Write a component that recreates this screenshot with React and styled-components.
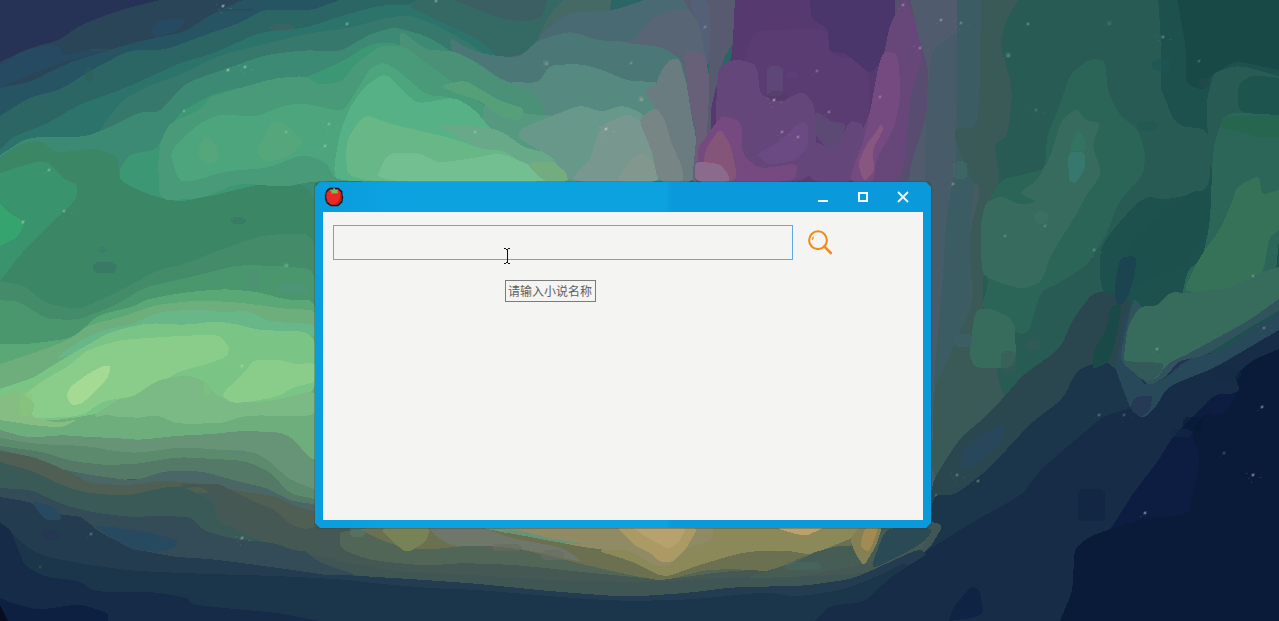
import React from 'react';
import styled, { createGlobalStyle } from 'styled-components';

const GlobalStyle = createGlobalStyle`
  * { box-sizing: border-box; }
  body { margin: 0; overflow: hidden; background: #0a1936; }
`;

const Desktop = styled.main`
  position: relative;
  width: 1279px;
  height: 621px;
  overflow: hidden;
  font-family: "Noto Sans CJK SC", sans-serif;
`;

const Wallpaper = styled.svg`
  display: block;
  width: 1279px;
  height: 621px;
`;

const AppWindow = styled.section`
  position: absolute;
  left: 315px;
  top: 182px;
  width: 616px;
  height: 346px;
  display: flex;
  flex-direction: column;
  padding: 0 8px 8px;
  background: linear-gradient(90deg, #0a9cdd 0%, #0ca1e0 12%, #0ca1df 57%, #0a9adc 58%, #0a9adc 100%);
  clip-path: polygon(5px 0, 611px 0, 616px 5px, 616px 341px, 611px 346px, 5px 346px, 0 341px, 0 5px);
`;

const WindowShade = styled.div`
  position: absolute;
  left: 314px;
  top: 181px;
  width: 618px;
  height: 348px;
  border-radius: 6px;
  background: rgba(45, 65, 65, 0.3);
`;

const TitleBar = styled.header`
  display: flex;
  align-items: center;
  justify-content: space-between;
  height: 30px;
  flex: none;
`;

const AppIcon = styled.svg`
  width: 22px;
  height: 22px;
  margin-bottom: 1px;
`;

const Controls = styled.div`
  display: flex;
`;

const ControlButton = styled.button`
  display: grid;
  place-items: center;
  width: 40px;
  height: 30px;
  padding: 0;
  border: 0;
  background: transparent;
  color: #f4f9fb;

  svg { display: block; width: 12px; height: 12px; }
`;

const Content = styled.div`
  flex: 1;
  padding: 13px 10px;
  background: #f4f4f2;
`;

const SearchRow = styled.form`
  display: flex;
  align-items: center;
  gap: 14px;
`;

const SearchInput = styled.input`
  width: 460px;
  height: 35px;
  padding: 0 6px;
  border: 1px solid #5dabe6;
  border-radius: 0;
  outline: none;
  background: #f4f4f2;
`;

const SearchButton = styled.button`
  width: 26px;
  height: 26px;
  margin-bottom: 1px;
  padding: 0;
  border: 0;
  background: transparent;

  svg { display: block; }
`;

const Tooltip = styled.div`
  position: absolute;
  left: 505px;
  top: 280px;
  width: 91px;
  height: 22px;
  padding-left: 2px;
  border: 1px solid #7b7b7b;
  background: #f4f4f2;
  color: #5e5e5e;
  font-size: 12px;
  line-height: 20px;
  white-space: nowrap;
`;

const TextCursor = styled.svg`
  position: absolute;
  left: 503px;
  top: 248px;
  width: 8px;
  height: 16px;
`;

// Wallpaper colour bands, painted back to front.
const bands = [
  ['#2a4558', '0,62 30,48 60,40 80,25 120,10 180,-5 900,-5 900,300 0,300'],
  ['#264a62', '0,66 24,50 58,44 64,56 95,48 110,50 50,66 0,88'],
  ['#264a62', '150,30 160,20 186,18 180,30 155,38'],
  ['#275463', '0,88 30,82 70,62 110,50 140,41 185,32 210,15 247,-2 900,-5 900,300 0,300'],
  ['#2b6665', '0,116 30,97 60,90 95,68 130,50 165,50 205,35 240,23 265,9 310,11 345,-2 900,-5 900,300 0,300'],
  ['#2c746b', '0,150 12,137 45,125 80,104 118,91 150,77 180,63 215,53 260,32 305,28 335,18 376,6 410,4 440,15 470,31 500,50 540,90 540,300 0,300'],
  ['#37786d', '98,135 105,122 123,100 150,85 180,75 220,55 260,45 310,33 350,28 385,18 410,15 440,27 470,44 500,65 530,92 540,180 98,180'],

  ['#346964', '405,5 426,-2 610,-2 590,72 540,80 500,60 480,40 450,26'],
  ['#3b5f63', '447,-2 548,-2 542,18 522,22 495,17 473,7'],
  ['#456964', '550,14 565,-2 611,-2 610,12 580,17 550,26 542,48 538,36'],
  ['#496a73', '507,57 525,54 547,29 570,12 612,11 650,-2 700,-2 716,182 560,182'],
  ['#4b7877', '448,36 470,50 490,55 518,58 539,40 570,31 601,41 640,42 672,48 683,61 690,97 692,182 560,182 500,140 460,80'],
  ['#568a81', '485,90 510,82 538,83 550,65 580,64 600,69 628,81 660,82 676,106 692,182 500,182'],

  ['#3c8a73', '0,155 28,137 85,137 110,127 140,112 160,112 185,83 225,69 265,55 305,50 340,52 370,34 395,27 426,36 445,47 475,70 505,94 540,115 530,190 0,300'],
  ['#3b8765', '0,157 20,144 40,140 57,153 95,148 118,156 120,181 150,196 180,202 210,193 245,181 285,180 307,187 318,205 318,330 0,330'],
  ['#39946e', '0,173 35,162 48,162 65,180 77,184 77,198 62,213 45,230 24,250 0,281'],
  ['#35a46f', '0,204 12,215 25,222 18,237 0,246'],
  ['#3c9775', '120,168 130,154 156,150 165,133 180,113 208,96 240,87 277,87 312,75 345,60 370,44 395,42 426,60 460,88 490,113 500,180 315,180 260,184 215,195 180,202 150,195 120,181'],
  ['#4b9178', '400,30 426,50 454,51 476,62 500,79 526,88 536,97 545,110 540,130 496,124 480,105 457,90 430,80 400,50'],
  ['#489a79', '158,163 161,140 170,123 200,110 210,97 240,88 276,78 305,76 319,85 342,82 357,62 382,45 405,47 430,66 465,91 496,116 520,181 315,181 285,187 238,183 203,198 160,201'],
  ['#559981', '485,100 525,114 560,116 596,150 594,182 500,182 480,130'],
  ['#4da57e', '170,153 181,140 200,123 220,114 255,117 282,106 304,103 342,112 355,94 370,68 385,62 405,76 426,95 450,97 470,116 495,137 540,180 336,181 326,162 303,154 268,168 226,171 190,182 178,180'],
  ['#55a079', '440,86 465,80 483,91 500,101 524,108 520,121 500,116 481,101 455,93'],
  ['#55a67a', '197,154 205,136 215,143 220,160 207,165'],
  ['#55a67a', '256,153 272,121 286,125 305,142 288,157 267,162'],
  ['#56b187', '334,166 340,132 351,105 366,85 386,73 402,90 418,104 455,97 475,110 490,128 525,163 545,183 336,182'],
  ['#68a98a', '436,125 465,125 500,130 525,148 558,155 567,182 530,182 490,155 463,140'],
  ['#68b887', '347,182 346,141 364,114 390,124 425,132 454,139 482,149 505,151 525,165 545,182'],
  ['#74bf91', '374,182 388,153 420,153 438,163 474,158 500,153 530,165 565,182'],
  ['#689889', '520,129 554,115 580,105 602,112 623,105 646,115 659,182 566,182 554,158 530,145 518,137'],
  ['#73ad7d', '525,163 552,161 567,173 568,182 545,182'],
  ['#78978f', '568,182 590,160 594,145 601,126 627,113 645,125 658,154 662,182'],
  ['#82988e', '615,182 629,162 642,152 655,163 660,182'],
  ['#6a7c80', '656,85 660,73 669,60 679,58 684,76 692,103 697,150 695,182 663,182 665,149 657,112 644,89'],
  ['#778585', '638,119 656,107 665,120 671,142 682,167 684,182 658,182 652,151'],
  ['#576575', '634,40 646,24 661,14 687,7 699,25 708,57 705,111 696,134 693,125 683,61 663,47 625,43'],
  ['#585a70', '682,-2 737,-2 735,40 722,60 716,118 706,145 704,121 710,78 705,32 689,9'],
  ['#686078', '684,50 704,52 710,79 706,150 697,182 692,182 697,130 689,103'],
  ['#536078', '692,8 700,28 708,70 711,30 708,0 690,-2'],
  ['#563a6f', '735,-2 902,-2 900,182 714,182 710,113 717,82 732,60'],
  ['#5a3c73', '744,55 756,30 828,29 831,56 870,60 868,182 738,182 742,105'],
  ['#64467a', '718,66 737,59 757,65 760,95 780,102 803,91 815,105 816,145 809,182 718,182 716,111'],
  ['#764a80', '699,182 697,149 710,131 722,115 742,122 742,154 759,169 798,163 795,182'],
  ['#855579', '705,150 720,128 731,146 738,182 701,182'],
  ['#8a6a8d', '695,182 695,161 720,164 728,174 730,182'],
  ['#6b4982', '756,154 778,143 801,121 808,124 808,148 794,161 768,165'],
  ['#4a366b', '810,-2 902,-2 893,31 884,60 870,74 855,61 844,53 829,52 828,28 811,19'],
  ['#5c4974', '815,110 832,122 846,123 840,145 829,150 815,135'],
  ['#64467a', '811,140 835,150 850,120 865,125 858,182 808,182'],
  ['#465a62', '900,-5 1010,-5 1010,490 920,530 918,182 900,182'],
  ['#584d71', '895,-2 935,-2 929,110 909,182 890,182'],
  ['#674679', '890,24 905,-2 915,20 923,55 910,96 903,182 847,182 853,151 871,111 881,68'],
  ['#754a80', '881,52 898,53 901,96 894,129 876,159 874,182 848,182 866,134'],
  ['#87577f', '858,164 866,145 876,132 881,124 884,129 872,150 875,171 864,182'],
  ['#505b6e', '910,-2 962,-2 958,72 951,180 941,311 931,530 922,530 905,182 929,109 928,66 919,39'],
  ['#485b69', '925,57 960,28 957,90 954,150 964,166 958,202 946,278 940,368 932,425 925,521'],
  ['#3b5c62', '957,-2 984,-2 979,127 978,160 969,226 971,280 967,348 949,405 932,421 935,365 943,280 946,218 957,159'],
  ['#3a5a57', '981,-2 1032,-2 1032,90 1020,142 1032,250 1032,450 931,490 934,390 943,370 956,340 973,304 969,236 981,188 971,180 955,139 955,128 979,128'],
  ['#275b53', '1020,-2 1160,-2 1180,30 1190,182 1163,280 1082,391 1018,417 999,386 994,338 982,312 985,242 991,201 1000,180 994,143 1007,138 1013,90 1000,45 1006,20'],
  ['#1c514d', '1158,-2 1279,-2 1279,345 1154,360 1126,360 1099,280 1101,244 1139,200 1161,194 1155,138 1161,132 1161,77 1161,39'],
  ['#275b53', '1140,80 1160,85 1175,125 1210,130 1210,190 1165,200 1140,195'],
  ['#194946', '1177,-2 1279,-2 1279,70 1236,61 1225,67 1210,76 1205,91 1186,84 1186,48'],
  ['#275b53', '1210,87 1214,73 1238,65 1279,76 1279,177 1211,182 1206,104'],
  ['#1d544d', '1238,84 1252,75 1279,78 1279,119 1238,112'],
  ['#2b6557', '1047,135 1059,108 1070,74 1090,59 1105,60 1108,92 1120,116 1137,128 1145,150 1144,174 1119,201 1106,235 1088,264 1063,281 1040,292 1027,339 981,311 989,280 980,258 987,204 1000,180 1021,175 1045,169'],
  ['#376b5d', '986,202 1002,196 1020,205 1038,202 1018,193 1038,180 1051,155 1061,120 1077,108 1085,120 1101,123 1092,145 1102,174 1087,194 1073,220 1051,254 1042,282 1022,289 1000,283 983,275 981,257 981,222'],
  ['#327460', '1069,151 1077,130 1085,138 1086,151'],
  ['#36786d', '1068,152 1085,152 1085,169 1076,183 1069,182'],
  ['#376b5c', '975,310 990,308 1015,320 1016,368 975,368 969,355'],
  ['#2b6659', '1225,112 1279,115 1279,239 1274,292 1259,310 1197,311 1180,307 1187,271 1202,259 1210,224 1213,147'],
  ['#26664f', '1222,116 1279,115 1279,137 1258,138 1243,132 1221,129'],
  ['#357258', '1237,187 1259,175 1262,195 1279,190 1279,230 1269,238 1264,270 1251,281 1228,292 1197,293 1184,290 1196,264 1207,247 1220,230 1232,202'],
  ['#376b5c', '1137,340 1135,315 1154,309 1170,292 1188,293 1209,290 1230,288 1258,273 1279,267 1279,306 1248,326 1221,345 1190,356 1164,359'],
  ['#2a464e', '931,483 960,438 983,419 1003,398 1024,374 1060,349 1073,319 1094,291 1130,295 1135,370 1109,375 1081,402 1044,424 1018,451 989,472 931,530'],
  ['#1b364a', '931,495 955,495 985,472 1009,447 1032,422 1063,399 1077,370 1104,360 1117,370 1135,383 1145,412 1137,435 1080,454 1030,502 930,548 880,610 845,621 922,621'],
  ['#172d47', '840,621 875,590 920,555 976,520 1022,495 1040,470 1075,440 1105,415 1136,407 1163,394 1180,374 1279,330 1279,621'],
  ['#0d1d42', '1087,548 1109,532 1133,493 1156,464 1172,438 1190,419 1215,394 1236,394 1279,354 1279,621 1061,621 1077,583'],
  ['#0a1a39', '1060,621 1073,590 1074,549 1090,536 1140,519 1190,514 1192,494 1201,458 1191,434 1204,412 1223,417 1240,390 1235,375 1253,360 1279,349 1279,621'],
  ['#28495a', '1115,367 1119,347 1127,313 1131,307 1123,355 1135,366 1144,386 1165,379 1186,360 1226,349 1252,328 1279,314 1279,330 1238,354 1214,368 1174,384 1165,391 1156,407 1143,419 1131,410 1120,381'],
  ['#30535c', '1119,361 1131,307 1135,298 1155,326 1197,330 1279,299 1279,311 1249,328 1223,344 1204,356 1178,361 1166,377 1149,386 1138,375'],
  ['#376b5c', '1123,363 1128,326 1140,306 1170,305 1217,310 1279,280 1279,299 1248,321 1217,338 1186,355 1168,363 1157,378 1149,380 1139,368'],
  ['#335a58', '1121,361 1142,362 1165,363 1160,374 1151,381 1142,380'],
  ['#263a55', '1135,397 1153,395 1150,410 1140,418 1130,408'],
  ['#28475a', '960,452 985,432 1003,424 1004,440 980,462 962,472'],
  ['#1a4a48', '1112,304 1122,306 1116,340 1109,362 1092,370 1094,350 1106,330'],
  ['#1c504d', '1126,259 1132,240 1144,230 1164,213 1194,190 1210,193 1210,220 1200,242 1183,267 1152,276 1130,291'],
  ['#1b4350', '1120,257 1137,256 1134,279 1126,302 1117,306 1114,290'],

  ['#4c7a68', '0,330 330,330 330,530 0,470'],
  ['#3a5458', '0,470 330,505 330,580 0,560'],
  ['#438b69', '0,281 25,286 45,303 78,310 112,295 158,270 185,264 220,250 263,235 316,233 316,323 0,323'],
  ['#4a966d', '0,300 20,302 46,319 78,320 116,305 145,287 195,276 237,265 286,266 316,270 316,345 0,350'],
  ['#5aa875', '0,344 30,344 73,338 98,315 132,307 148,299 187,292 226,289 258,292 287,300 316,300 316,362 0,370'],
  ['#6eae7c', '0,364 25,356 67,341 89,325 122,317 155,305 200,300 244,303 286,309 320,310 320,480 260,475 0,450'],
  ['#67b788', '53,360 81,340 103,330 131,325 158,312 200,309 226,313 246,310 270,322 316,324 316,338 213,330 118,338 88,350'],
  ['#7ac486', '0,389 33,378 55,364 82,348 110,332 147,323 186,325 216,321 240,325 258,330 316,332 316,397 239,405 176,400 109,412 53,421 0,420'],
  ['#8acd8b', '7,407 24,395 45,379 69,366 87,350 120,340 163,337 219,334 229,347 228,356 205,365 179,371 142,395 103,401 82,416 33,419 12,413'],
  ['#a5da94', '66,396 71,386 88,374 102,366 111,366 108,378 96,391 83,403 72,406'],
  ['#7bb985', '90,418 117,400 134,396 158,380 187,375 207,382 217,397 250,403 276,400 316,390 316,417 247,415 219,424 169,424 137,417'],
  ['#8acd8b', '224,392 231,385 246,371 253,360 281,360 295,364 316,363 316,382 294,387 279,396 250,402 232,403 223,397'],
  ['#85bd82', '0,397 17,390 35,403 31,417 59,423 78,419 64,427 41,428 0,420'],
  ['#6eae7c', '0,420 45,427 82,426 103,414 130,419 158,415 177,424 229,423 247,416 273,424 320,425 320,465 301,452 285,435 239,435 207,440 159,438 118,439 78,435 24,438 0,429'],
  ['#405a5b', '0,444 40,450 130,460 220,460 270,485 316,510 316,565 0,540'],
  ['#679476', '0,430 29,438 62,435 88,437 115,438 141,440 174,436 213,434 240,431 278,432 291,437 311,459 320,460 320,497 301,494 290,490 278,475 263,468 205,458 146,458 118,457 89,450 48,446 0,442'],
  ['#5c8a6d', '0,438 36,444 87,446 114,451 139,453 182,447 224,450 254,452 268,460 290,480 320,491 320,509 291,502 272,490 242,475 209,468 158,469 131,477 98,470 61,462 38,457 0,450'],
  ['#547a67', '0,446 43,452 71,461 104,465 137,464 177,457 216,459 246,461 270,472 290,494 320,500 320,514 286,505 250,490 220,480 185,475 150,478 104,481 68,474 36,464 0,455'],
  ['#4a6766', '0,450 36,458 55,468 91,475 134,481 164,471 202,471 236,481 267,488 291,501 320,505 320,524 287,517 264,505 232,493 203,483 157,486 102,490 61,480 31,468 0,462'],
  ['#505f53', '0,452 30,456 54,465 75,475 92,484 134,485 161,480 204,484 239,491 275,496 297,507 320,512 320,540 289,533 255,509 212,492 157,494 110,496 75,492 43,481 0,463'],
  ['#3a5a58', '0,462 33,471 61,485 87,493 126,496 161,488 182,486 215,503 216,520 237,528 275,545 320,561 277,551 247,547 207,538 161,524 104,519 72,507 35,496 0,490'],
  ['#465853', '202,486 217,503 218,521 237,530 270,545 320,558 320,532 292,526 275,510 250,500 220,484 204,484 181,484 182,489'],
  ['#344c57', '0,488 32,490 61,504 91,512 129,517 162,516 191,517 204,531 238,540 258,541 278,544 292,550 320,553 371,568 426,571 426,594 0,560'],
  ['#233c50', '0,497 30,502 60,515 80,516 101,533 134,549 175,557 210,559 234,562 293,570 340,577 426,586 426,621 0,621'],
  ['#284a60', '93,525 112,527 149,532 178,540 175,548 160,552 133,550 115,540'],
  ['#284a60', '30,500 55,507 63,520 45,520'],
  ['#1b364a', '0,522 28,548 47,557 90,565 134,571 208,574 277,576 336,579 387,584 426,586 426,621 0,621'],
  ['#162b48', '0,523 10,529 20,554 24,565 45,577 80,581 95,592 155,592 187,598 193,605 278,613 320,621 0,621'],
  ['#0d2041', '0,598 12,603 38,610 80,604 108,613 108,621 0,621'],
  ['#080e20', '0,605 3,611 8,621 0,621'],

  ['#3f5654', '306,522 880,522 945,522 930,548 890,580 800,600 500,600 400,590 306,558'],
  ['#465853', '304,522 934,525 918,556 860,575 735,577 650,582 570,581 472,575 390,571 320,557 304,552'],
  ['#526658', '340,527 890,527 866,565 820,571 736,570 664,580 582,572 517,565 461,563 426,566 370,560 340,549'],
  ['#6b7051', '356,527 877,527 855,540 845,550 799,557 780,572 735,569 705,570 663,581 630,575 586,565 545,555 501,545 463,546 426,550 394,545 370,535'],
  ['#778257', '379,527 431,527 426,542 407,553 395,544'],
  ['#6f776b', '427,527 481,527 514,539 561,547 585,563 534,551 493,546 453,546 438,538'],
  ['#918b65', '480,525 767,525 850,525 820,551 771,551 733,548 713,551 690,561 666,574 638,562 612,551 577,546 549,540 515,534'],
  ['#699276', '478,527 514,529 553,539 585,544 561,543 520,535 501,532'],
  ['#8b8859', '595,550 630,550 656,567 670,565 687,548 712,540 714,525 783,525 874,525 860,535 820,551 813,555 783,550 744,552 699,565 664,578 634,562'],
  ['#ab9a64', '614,525 700,525 685,550 673,562 660,562 649,552 635,546'],
  ['#b7a16c', '629,525 688,525 678,544 668,549 655,542 642,534'],
  ['#bca268', '769,525 829,525 817,531 805,536 788,532'],
  ['#465d56', '760,573 799,561 812,553 837,546 861,546 876,535 890,527 921,529 904,550 879,562 831,570 800,577 745,578'],
  ['#857f54', '850,540 860,525 883,525 876,546 864,566 856,555'],
  ['#a18b53', '865,527 879,527 869,553 860,546'],
  ['#2a4a55', '883,535 890,528 934,528 924,542 900,556 870,570'],
  ['#233c50', '312,573 426,580 480,584 548,591 626,597 687,593 735,587 803,586 852,579 877,568 920,548 930,559 900,589 850,604 740,600 645,604 505,599 426,592'],
  ['#1b364a', '330,579 426,588 480,590 548,596 588,599 626,601 680,600 717,597 767,592 795,597 842,590 876,577 910,560 920,621 330,621'],
  ['#172d47', '815,621 829,606 865,602 887,580 911,564 949,541 1000,529 1000,621'],
  ['#0f2445', '953,608 971,586 980,590 984,616 949,621'],
];

const patches = [
  [270, 24, 24, 7, '#426462'], [211, 9, 42, 2, '#284856'], [91, 49, 27, 2, '#30534e'],
  [231, 217, 15, 7, '#367268'], [93, 262, 23, 11, '#386f68'], [98, 247, 9, 6, '#36766c'],
  [248, 270, 12, 20, '#519078'], [277, 284, 30, 10, '#529582'], [85, 67, 8, 15, '#305f54'],
  [767, 66, 16, 30, '#62507b'], [768, 91, 20, 10, '#513a66'], [785, 72, 14, 6, '#60407b'],
  [1152, 59, 18, 12, '#1f5553'], [1199, 79, 11, 9, '#2a4750'], [1137, 121, 20, 10, '#215753'],
  [953, 161, 14, 18, '#426e6a'], [1035, 211, 13, 13, '#3e7265'],
  [1027, 339, 13, 12, '#3a5a57'], [1001, 351, 15, 22, '#3a5a57'], [955, 334, 18, 13, '#3a626a'],
  [1078, 489, 27, 32, '#102242'], [1183, 417, 20, 14, '#081a34'],
  [1213, 366, 28, 13, '#132e43'], [1170, 429, 22, 8, '#132946'],
  [42, 529, 18, 11, '#263557'], [228, 450, 19, 5, '#598676'], [350, 525, 15, 12, '#5d7964'],
  [492, 544, 30, 7, '#676c60'], [541, 550, 23, 10, '#6a6e61'], [785, 562, 36, 8, '#496762'],
  [204, 377, 7, 18, '#7bc482'], [20, 392, 12, 24, '#89c67d'],
];

const stars = [
  [223,6,'#91adb2',2],[347,24,'#75aaa1',2],[228,70,'#94c6a4',2],[245,67,'#87bda0',2],[184,111,'#77b493',2],
  [49,170,'#7db797',2],[64,211,'#74b58d',2],[23,222,'#85caa0',2],[286,132,'#82b78b',2],[329,124,'#83bd98',2],
  [325,146,'#81c59a',2],[436,1,'#82a3a2',2],[546,63,'#79988d',3],[631,63,'#79948a',2],[641,99,'#85a397',3],
  [606,129,'#b5d0c4',2],[475,132,'#86c5a0',2],[705,27,'#8b8193',2],[774,100,'#c094b9',2],[817,71,'#8e6699',2],
  [829,112,'#9078a0',2],[782,132,'#a57dae',2],[798,137,'#a57cac',2],[903,5,'#98809d',2],[920,48,'#9880a5',2],
  [941,20,'#8895a4',2],[880,97,'#9876a0',2],[961,23,'#6c8b83',2],[1028,24,'#679286',2],[1008,55,'#5b8b7c',3],
  [1163,37,'#5d9183',2],[1109,23,'#3e7464',3],[953,184,'#739785',2],[1036,110,'#4b7870',2],[1005,236,'#5e8d7d',2],
  [1045,226,'#588d86',2],[1094,250,'#55917c',2],[1199,61,'#417363',2],[1253,276,'#609c80',2],[1264,328,'#628076',2],
  [1157,349,'#6e9c80',2],[1145,513,'#8290ab',2],[1253,475,'#9887b3',2],[1262,407,'#7586a8',2],[1099,415,'#4e7373',2],
  [1124,415,'#3c6268',2],[1224,453,'#3e4b79',2],[242,366,'#a1d78e',2],[242,538,'#84998b',2],[91,534,'#60746d',2],
  [978,481,'#608178',2],[957,475,'#638176',2],[936,495,'#47666b',2],[40,567,'#39515a',2],[286,265,'#6aaa86',3],
];

// Rounds only the corner of each vertex so neighbouring bands stay closed.
function bandPath(value) {
  const points = value.split(' ').map((pair) => pair.split(',').map(Number));
  const count = points.length;
  const between = (a, b, t) => [a[0] + (b[0] - a[0]) * t, a[1] + (b[1] - a[1]) * t];
  return points.map((point, index) => {
    const previous = points[(index + count - 1) % count];
    const next = points[(index + 1) % count];
    const edge = point[0] <= 0 || point[0] >= 1279 || point[1] < 0 || point[1] >= 621;
    const entry = edge ? point : between(point, previous, 0.3);
    const exit = edge ? point : between(point, next, 0.3);
    return `${index === 0 ? 'M' : 'L'}${entry}Q${point} ${exit}`;
  }).join('') + 'Z';
}

function Aurora() {
  return (
    <Wallpaper viewBox="0 0 1279 621" preserveAspectRatio="none" shapeRendering="crispEdges" aria-hidden="true">
      <rect width="1279" height="621" fill="#263356" />
      {bands.map(([color, points], index) => <path key={index} d={bandPath(points)} fill={color} />)}
      {patches.map(([x, y, width, height, color], index) => (
        <path key={index} fill={color} opacity="0.55"
          d={height < 5
            ? `M${x} ${y}h${width}v${height}h-${width}z`
            : `M${x + 2} ${y}h${width - 5}v2h3v${height - 4}h-2v2h-${width - 4}v-2h-2v-${height - 4}h3z`} />
      ))}
      {stars.map(([x, y, color, size], index) => (
        <g key={index} fill={color} opacity="0.85">
          <circle cx={x} cy={y} r={size} opacity="0.3" />
          <rect x={x - 1} y={y - 1} width={size} height={size} opacity="0.85" />
          <rect x={x - 5} y={y + 3} width="2" height="1" opacity="0.2" />
          {index % 3 === 0 && <path d={`M${x - 7} ${y - 2}h2v1h-2zM${x + 6} ${y + 2}h3v1h-3zM${x - 2} ${y + 6}h1v2h-1z`} opacity="0.22" />}
        </g>
      ))}
    </Wallpaper>
  );
}

function TomatoIcon() {
  return (
    <AppIcon viewBox="0 0 20 20" aria-label="Tomato">
      <path d="M6 1.7h8l3.7 3v3.6L18.5 10l-.9 5-3.8 3.3H7L3 15.5l-1.3-4V7L3.5 3.5z" fill="#171b20" />
      <path d="M2 6v2M1.5 10v1.5M3 14v1" stroke="#267d9f" strokeWidth="1" />
      <path d="M6 3.2h8l2.6 3v7.2L13 17H7.2L4 14 2.9 9.8 3.4 6z" fill="#ed2822" />
      <path d="M15.5 5.5l1.4 3v5L13.2 17H10.4l3.8-3.2 1.3-3.5z" fill="#b51f22" />
      <path d="M9.3 2h1.5v1.2l3 .3-.8 1.4 1 1.6h-2l-.8.6-1-.8-2.8 1 .8-2.4H6.7V3.3h2.6z" fill="#80b955" />
    </AppIcon>
  );
}

export default function App() {
  return (
    <Desktop>
      <GlobalStyle />
      <Aurora />
      <WindowShade />
      <AppWindow>
        <TitleBar>
          <TomatoIcon />
          <Controls>
            <ControlButton aria-label="Minimize">
              <svg viewBox="0 0 12 12"><path d="M1 9h10v2H1z" fill="currentColor" /></svg>
            </ControlButton>
            <ControlButton aria-label="Maximize">
              <svg viewBox="0 0 12 12"><path d="M2 2h8v8H2z" fill="none" stroke="currentColor" strokeWidth="2" /></svg>
            </ControlButton>
            <ControlButton aria-label="Close">
              <svg viewBox="0 0 12 12"><path d="M1 1l10 10M11 1L1 11" fill="none" stroke="currentColor" strokeWidth="1.8" /></svg>
            </ControlButton>
          </Controls>
        </TitleBar>
        <Content>
          <SearchRow onSubmit={(event) => event.preventDefault()}>
            <SearchInput aria-label="小说名称" />
            <SearchButton aria-label="搜索">
              <svg width="26" height="26" viewBox="0 0 26 26" fill="none" stroke="#f28b19">
                <circle cx="11" cy="11.2" r="8.9" strokeWidth="2.1" />
                <path d="M17.2 17.4l6.6 6.6" strokeWidth="2.6" strokeLinecap="round" />
                <path d="M5.2 10.8c0-1.5.6-2.5 1.4-3.1l-.5 2.2z" strokeWidth="0.8" />
              </svg>
            </SearchButton>
          </SearchRow>
        </Content>
      </AppWindow>
      <Tooltip role="tooltip">请输入小说名称</Tooltip>
      <TextCursor viewBox="0 0 8 16" shapeRendering="crispEdges" aria-hidden="true">
        <path d="M1 0h2v1H1zM5 0h2v1H5zM3 1h2v1H3zM4 2h1v12H4zM3 14h2v1H3zM1 15h2v1H1zM5 15h2v1H5z" fill="#111" />
      </TextCursor>
    </Desktop>
  );
}
